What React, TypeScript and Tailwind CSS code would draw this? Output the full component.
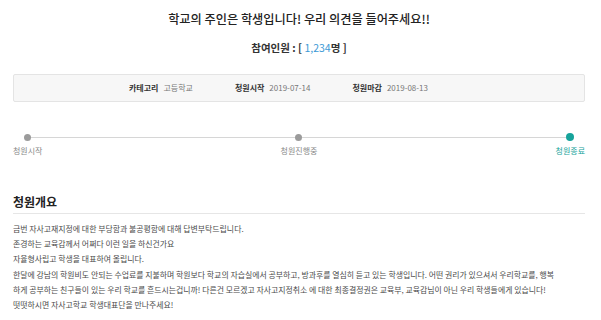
const font = { fontFamily: '"Noto Sans CJK KR", "Noto Sans", sans-serif' };

const body = [
  "금번 자사고재지정에 대한 부당함과 불공평함에 대해 답변부탁드립니다.",
  "존경하는 교육감께서 어쩌다 이런 일을 하신건가요",
  "자율형사립고 학생을 대표하여 올립니다.",
  "한달에 강남의 학원비도 안되는 수업료를 지불하며 학원보다 학교의 자습실에서 공부하고, 방과후를 열심히 듣고 있는 학생입니다. 어떤 권리가 있으셔서 우리학교를, 행복",
  "하게 공부하는 친구들이 있는 우리 학교를 흔드시는겁니까! 다른건 모르겠고 자사고지정취소 에 대한 최종결정권은 교육부, 교육감님이 아닌 우리 학생들에게 있습니다!",
  "떳떳하시면 자사고학교 학생대표단을 만나주세요!",
];

function Info({ label, value }: { label: string; value: string }) {
  return (
    <div className="flex items-center gap-[5px]">
      <span className="font-bold text-[#333]">{label}</span>
      <span className="text-[#777]">{value}</span>
    </div>
  );
}

function Dot({ active }: { active?: boolean }) {
  return active ? (
    <span className="h-[8px] w-[8px] shrink-0 rounded-full bg-[#16a39b]" />
  ) : (
    <span className="h-[7px] w-[7px] shrink-0 rounded-full bg-[#9b9b9b]" />
  );
}

export default function App() {
  return (
    <div className="h-[320px] w-[601px] overflow-hidden bg-white" style={font}>
      <div className="ml-[13px] w-[572px] pt-[11px]">
        <h1 className="text-center text-[12.2px] leading-[16px] font-medium text-[#222]">
          학교의 주인은 학생입니다! 우리 의견을 들어주세요!!
        </h1>
        <p className="mt-[14px] text-center text-[10.5px] leading-[14px] font-bold text-[#333]">
          참여인원 : [ <span className="font-normal text-[#3d9ad6]">1,234</span>명 ]
        </p>

        {/* info box */}
        <div className="mt-[19px] flex h-[28px] items-center gap-[42px] rounded-[2px] border border-[#e4e4e4] bg-[#f7f7f7] pl-[115px] text-[8px]">
          <Info label="카테고리" value="고등학교" />
          <Info label="청원시작" value="2019-07-14" />
          <Info label="청원마감" value="2019-08-13" />
        </div>

        {/* progress */}
        <div className="mt-[31px] flex h-[8px] items-center px-[11px]">
          <Dot />
          <span className="h-px flex-1 bg-[#d6d6d6]" />
          <Dot />
          <span className="h-px flex-1 bg-[#d6d6d6]" />
          <Dot active />
        </div>
        <div className="mt-[5px] flex justify-between text-[8px] leading-[10px] text-[#888]">
          <span>청원시작</span>
          <span>청원진행중</span>
          <span className="text-[#16a39b]">청원종료</span>
        </div>

        {/* summary */}
        <h2 className="mt-[38px] border-b border-[#e6e6e6] pb-[4px] text-[12px] leading-[15px] font-bold text-[#222]">
          청원개요
        </h2>
        <div className="mt-[7px] text-[7.9px] leading-[15.2px] whitespace-nowrap text-[#4a4a4a]">
          {body.map((line) => (
            <p key={line}>{line}</p>
          ))}
        </div>
      </div>
    </div>
  );
}
